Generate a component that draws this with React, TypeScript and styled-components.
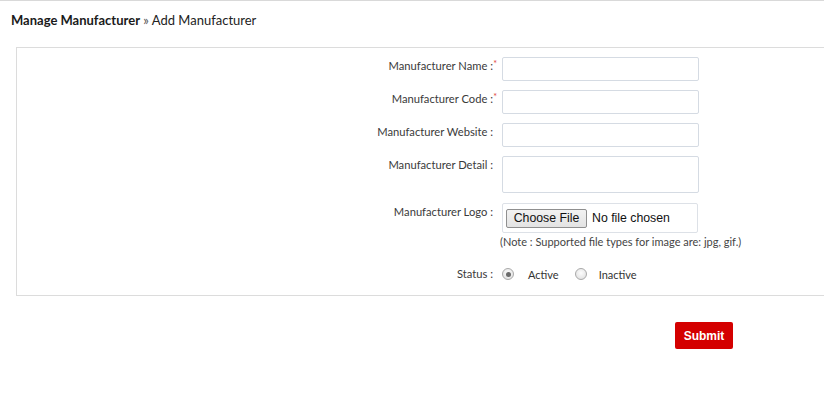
import React from "react";
import styled, { createGlobalStyle } from "styled-components";

const Global = createGlobalStyle`
  html, body { margin: 0; padding: 0; background: #fff; overflow: hidden; }
  body { font-family: Lato, "Open Sans", Arial, sans-serif; color: #333; }
  * { box-sizing: border-box; }
`;

const Page = styled.div`
  width: 824px;
  min-height: 414px;
  border-top: 1px solid #d9d9d9;
`;

const Header = styled.div`
  height: 46px;
  padding: 11px 11px 0;
  font-size: 13px;
  line-height: 16px;
  color: #222;
`;

const Crumb = styled.span`
  font-weight: 700;
  color: #1a1a1a;
`;

const Sep = styled.span`
  color: #555;
`;

const Panel = styled.div`
  margin-left: 16px;
  width: 830px;
  border: 1px solid #dcdcdc;
  padding: 9px 0 11px;
  display: flex;
  flex-direction: column;
`;

const Row = styled.div<{ $gap?: number }>`
  display: grid;
  grid-template-columns: 476px 197px;
  column-gap: 9px;
  margin-top: ${(p) => p.$gap ?? 0}px;
  align-items: start;
`;

const Label = styled.label<{ $pad?: number }>`
  position: relative;
  text-align: right;
  font-size: 11.2px;
  line-height: 16px;
  padding-top: ${(p) => p.$pad ?? 1}px;
  color: #3a3a3a;
  white-space: nowrap;
`;

const Req = styled.span`
  position: absolute;
  right: -4px;
  top: -1px;
  color: #e0413b;
  font-size: 9px;
`;

const Input = styled.input`
  height: 24px;
  width: 197px;
  border: 1px solid #d5dbe3;
  border-radius: 2px;
  padding: 2px 6px;
  font: inherit;
  font-size: 12px;
  outline: none;
`;

const TextArea = styled.textarea`
  height: 37px;
  width: 197px;
  border: 1px solid #d5dbe3;
  border-radius: 2px;
  resize: none;
  font: inherit;
  outline: none;
`;

const FileBox = styled.div`
  height: 30px;
  width: 196px;
  border: 1px solid #dde1e7;
  border-radius: 2px;
  display: flex;
  align-items: center;
  padding-left: 3px;
  gap: 5px;
  font-family: Arial, "Liberation Sans", sans-serif;
  font-size: 12.3px;
  color: #111;
`;

const FileButton = styled.span`
  height: 19px;
  width: 81px;
  display: flex;
  align-items: center;
  justify-content: center;
  border: 1px solid #8f8f8f;
  border-radius: 2px;
  background: linear-gradient(#f2f2f2, #e3e3e3);
  color: #111;
`;

const Note = styled.div`
  grid-column: 2;
  font-size: 11px;
  line-height: 14px;
  color: #444;
  white-space: nowrap;
  margin-left: -2px;
`;

const StatusRow = styled.div`
  display: grid;
  grid-template-columns: 476px auto;
  column-gap: 9px;
  align-items: center;
  height: 20px;
  margin-top: 15px;
`;

const RadioGroup = styled.div`
  display: flex;
  align-items: center;
  font-size: 11px;
  color: #333;
`;

const RadioOpt = styled.label<{ $after: number; $inner: number }>`
  display: flex;
  align-items: center;
  gap: ${(p) => p.$inner}px;
  margin-right: ${(p) => p.$after}px;
`;

const Radio = styled.span<{ $on?: boolean }>`
  width: 12px;
  height: 12px;
  border-radius: 50%;
  border: 1px solid #a9a9a9;
  background: radial-gradient(circle at 50% 40%, #fdfdfd, #dcdcdc);
  display: flex;
  align-items: center;
  justify-content: center;
  &::after {
    content: "";
    width: 5px;
    height: 5px;
    border-radius: 50%;
    background: ${(p) => (p.$on ? "#6b6b6b" : "transparent")};
  }
`;

const Footer = styled.div`
  display: flex;
  padding-left: 675px;
  margin-top: 26px;
`;

const Submit = styled.button`
  width: 58px;
  height: 27px;
  border: none;
  border-radius: 2px;
  background: #d40000;
  color: #fff;
  font-family: Arial, "Liberation Sans", sans-serif;
  font-weight: 700;
  font-size: 12px;
  padding: 0;
`;

export default function App() {
  return (
    <Page>
      <Global />
      <Header>
        <Crumb>Manage Manufacturer</Crumb> <Sep>»</Sep> Add Manufacturer
      </Header>
      <Panel>
        <Row>
          <Label>
            Manufacturer Name :<Req>*</Req>
          </Label>
          <Input />
        </Row>
        <Row $gap={9}>
          <Label>
            Manufacturer Code :<Req>*</Req>
          </Label>
          <Input />
        </Row>
        <Row $gap={9}>
          <Label>Manufacturer Website :</Label>
          <Input />
        </Row>
        <Row $gap={9}>
          <Label>Manufacturer Detail :</Label>
          <TextArea />
        </Row>
        <Row $gap={10}>
          <Label>Manufacturer Logo :</Label>
          <FileBox>
            <FileButton>Choose File</FileButton>
            No file chosen
          </FileBox>
        </Row>
        <Row $gap={2}>
          <Note>(Note : Supported file types for image are: jpg, gif.)</Note>
        </Row>
        <StatusRow>
          <Label $pad={0}>Status :</Label>
          <RadioGroup>
            <RadioOpt $after={16} $inner={14}>
              <Radio $on />
              Active
            </RadioOpt>
            <RadioOpt $after={0} $inner={12}>
              <Radio />
              Inactive
            </RadioOpt>
          </RadioGroup>
        </StatusRow>
      </Panel>
      <Footer>
        <Submit>Submit</Submit>
      </Footer>
    </Page>
  );
}
